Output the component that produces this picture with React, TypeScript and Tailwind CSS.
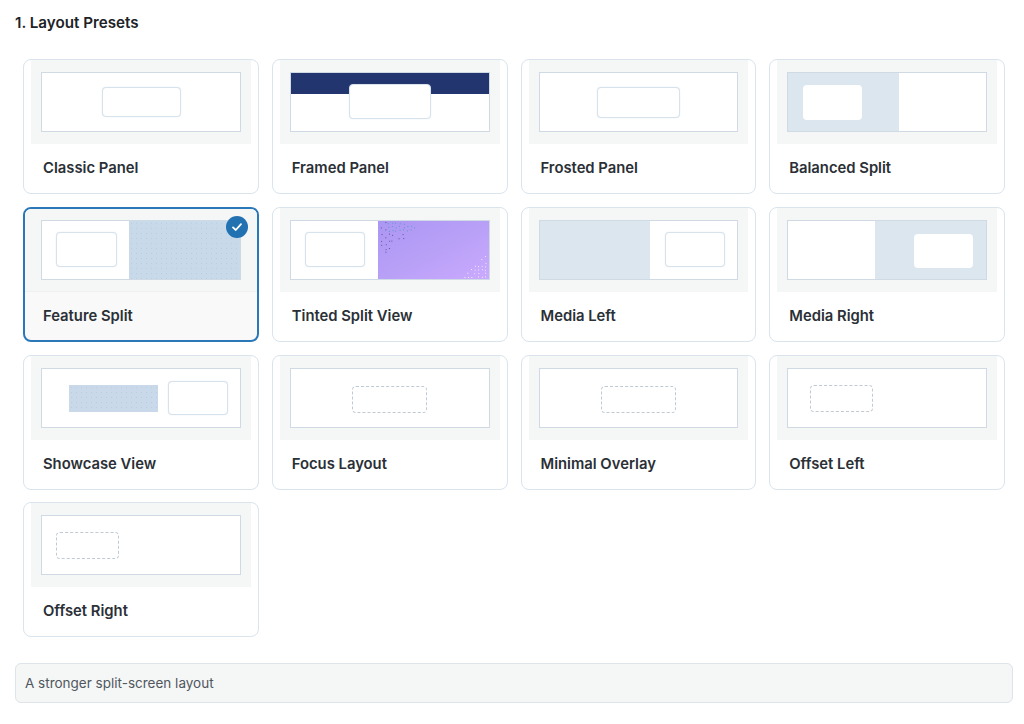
import React from 'react';

const boxCls = 'bg-white rounded-[4px] border border-[#d6e2ec] shadow-[0_0_1px_rgba(140,170,200,0.35)]';
const dashCls = 'rounded-[4px] border border-dashed border-[#bfcad4]';
const blueSoft = 'bg-[#dce6ef]';

// jittered stipple on a grid, same result on each render
const jitter = (a: number, b: number) => {
    const v = Math.sin(a * 127.1 + b * 311.7) * 43758.5453;
    return v - Math.floor(v);
};

const darkDots: { x: number; y: number; teal: boolean }[] = [];
for (let gy = 0; gy < 11; gy++) {
    for (let gx = 0; gx < 10; gx++) {
        const fade = gx / 10 + gy / 11;
        if (fade < 1 && jitter(gx, gy) > 0.2 + fade * 0.4) {
            darkDots.push({
                x: gx * 3.8 + 1 + jitter(gy, gx) * 2,
                y: gy * 3.8 + 1 + jitter(gx + 9, gy) * 2,
                teal: gy < 3 && gx > 1,
            });
        }
    }
}

const lightDots: { x: number; y: number }[] = [];
for (let gy = 0; gy < 7; gy++) {
    for (let gx = 0; gx < 7; gx++) {
        if (gx / 7 + gy / 7 < 1 && jitter(gx + 20, gy) > 0.25) {
            lightDots.push({ x: 110 - gx * 3.6 - jitter(gy, gx + 3), y: 58 - gy * 3.6 - jitter(gx, gy + 5) });
        }
    }
}

const stipple = 'bg-[radial-gradient(#b6cde2_0.5px,transparent_0.7px)] bg-[length:5px_5px]';

const Frame: React.FC<{ children?: React.ReactNode; className?: string }> = ({ children, className }) => (
    <div className={`h-[60px] w-full border border-[#d0dae4] bg-white ${className ?? ''}`}>{children}</div>
);

const previews: Record<string, React.ReactNode> = {
    classic: (
        <Frame className="flex items-center justify-center">
            <div className={`${boxCls} ml-[1px] h-[30px] w-[79px]`} />
        </Frame>
    ),
    framed: (
        <Frame className="flex flex-col items-center">
            <div className="h-[21px] w-full shrink-0 bg-[#23356f]" />
            <div className={`${boxCls} -mt-[10px] h-[35px] w-[82px]`} />
        </Frame>
    ),
    frosted: (
        <Frame className="flex items-center justify-center">
            <div className={`${boxCls} h-[31px] w-[83px]`} />
        </Frame>
    ),
    balanced: (
        <Frame className="flex">
            <div className={`flex w-[111px] items-center pl-[15px] ${blueSoft}`}>
                <div className="h-[35px] w-[59px] rounded-[4px] bg-white" />
            </div>
        </Frame>
    ),
    feature: (
        <Frame className="flex">
            <div className="flex w-[87px] items-center pl-[14px]">
                <div className={`${boxCls} h-[35px] w-[61px]`} />
            </div>
            <div className={`flex-1 bg-[#c8d9ea] ${stipple}`} />
        </Frame>
    ),
    tinted: (
        <Frame className="flex">
            <div className="flex w-[87px] items-center pl-[14px]">
                <div className={`${boxCls} h-[35px] w-[60px]`} />
            </div>
            <svg viewBox="0 0 112 60" className="h-full flex-1 bg-gradient-to-br from-[#ab96f3] via-[#b8a0f7] to-[#caaafe]">
                {darkDots.map((d, i) => (
                    <rect key={i} x={d.x} y={d.y} width="0.9" height="0.9" fill={d.teal ? '#3f9db5' : '#4a3f80'} />
                ))}
                {lightDots.map((d, i) => (
                    <rect key={i} x={d.x} y={d.y} width="0.9" height="0.9" fill="#ffffff" />
                ))}
            </svg>
        </Frame>
    ),
    mediaLeft: (
        <Frame className="flex">
            <div className={`w-[110px] ${blueSoft}`} />
            <div className="flex flex-1 items-center pl-[15px]">
                <div className={`${boxCls} h-[35px] w-[60px]`} />
            </div>
        </Frame>
    ),
    mediaRight: (
        <Frame className="flex">
            <div className="w-[87px]" />
            <div className={`flex flex-1 items-center pl-[39px] ${blueSoft}`}>
                <div className="mt-[2px] h-[34px] w-[59px] rounded-[4px] bg-white" />
            </div>
        </Frame>
    ),
    showcase: (
        <Frame className="flex items-center pl-[27px]">
            <div className={`mt-[2px] h-[27px] w-[89px] bg-[#c9d9ea] ${stipple}`} />
            <div className={`${boxCls} ml-[10px] h-[34px] w-[60px]`} />
        </Frame>
    ),
    focus: (
        <Frame className="flex items-center justify-center">
            <div className={`${dashCls} mt-[3px] h-[27px] w-[75px]`} />
        </Frame>
    ),
    minimal: (
        <Frame className="flex items-center justify-center">
            <div className={`${dashCls} mt-[3px] h-[27px] w-[75px]`} />
        </Frame>
    ),
    offsetLeft: (
        <Frame className="flex items-center pl-[22px]">
            <div className={`${dashCls} mt-[2px] h-[27px] w-[63px]`} />
        </Frame>
    ),
    offsetRight: (
        <Frame className="flex items-center pl-[14px]">
            <div className={`${dashCls} h-[27px] w-[63px]`} />
        </Frame>
    ),
};

const presets = [
    { id: 'classic', label: 'Classic Panel' },
    { id: 'framed', label: 'Framed Panel' },
    { id: 'frosted', label: 'Frosted Panel' },
    { id: 'balanced', label: 'Balanced Split' },
    { id: 'feature', label: 'Feature Split', selected: true },
    { id: 'tinted', label: 'Tinted Split View' },
    { id: 'mediaLeft', label: 'Media Left' },
    { id: 'mediaRight', label: 'Media Right' },
    { id: 'showcase', label: 'Showcase View' },
    { id: 'focus', label: 'Focus Layout' },
    { id: 'minimal', label: 'Minimal Overlay' },
    { id: 'offsetLeft', label: 'Offset Left' },
    { id: 'offsetRight', label: 'Offset Right' },
];

const PresetCard: React.FC<{ id: string; label: string; selected?: boolean }> = ({ id, label, selected }) => (
    <div
        className={`relative flex h-[135px] flex-col overflow-hidden rounded-[8px] ${
            selected ? 'border-2 border-[#2b78b9] bg-[#f9f9f9]' : 'border border-[#d9e4ed] bg-white'
        }`}
    >
        <div
            className={`shrink-0 bg-[#f5f6f6] ${
                selected ? 'h-[83px] border-b border-[#eef0f1] px-[16px] pt-[11px]' : 'mx-[7px] h-[84px] px-[10px] pt-[12px]'
            }`}
        >
            {previews[id]}
        </div>
        <div className={`mt-[14px] text-[14.8px] font-semibold leading-[20px] text-[#2a3036] ${selected ? 'pl-[18px]' : 'pl-[19px]'}`}>
            {label}
        </div>
        {selected && (
            <div className="absolute right-[9px] top-[7px] flex h-[22px] w-[22px] items-center justify-center rounded-full bg-[#2271b1]">
                <svg viewBox="0 0 12 12" className="h-[12px] w-[12px]" fill="none" stroke="#ffffff" strokeWidth={1.8} strokeLinecap="round" strokeLinejoin="round">
                    <path d="M2 6.4 4.8 9 10 3.2" />
                </svg>
            </div>
        )}
    </div>
);

export default function App() {
    return (
        <div className="h-[724px] w-[1024px] overflow-hidden bg-white pl-[15px] pr-[11px] font-['Inter','Liberation_Sans',sans-serif]">
            <h2 className="pt-[13px] text-[15.2px] font-semibold leading-[20px] text-[#1d2327]">1. Layout Presets</h2>
            <div className="ml-[8px] mr-[8px] mt-[26px] grid grid-cols-4 gap-x-[13px] gap-y-[12.75px]">
                {presets.map((p) => (
                    <PresetCard key={p.id} {...p} />
                ))}
            </div>
            <div className="mt-[26px] flex h-[40px] items-center rounded-[6px] border border-[#dde4ea] bg-[#f5f6f6] pl-[9px] text-[13.5px] text-[#50575e]">
                A stronger split-screen layout
            </div>
        </div>
    );
}
